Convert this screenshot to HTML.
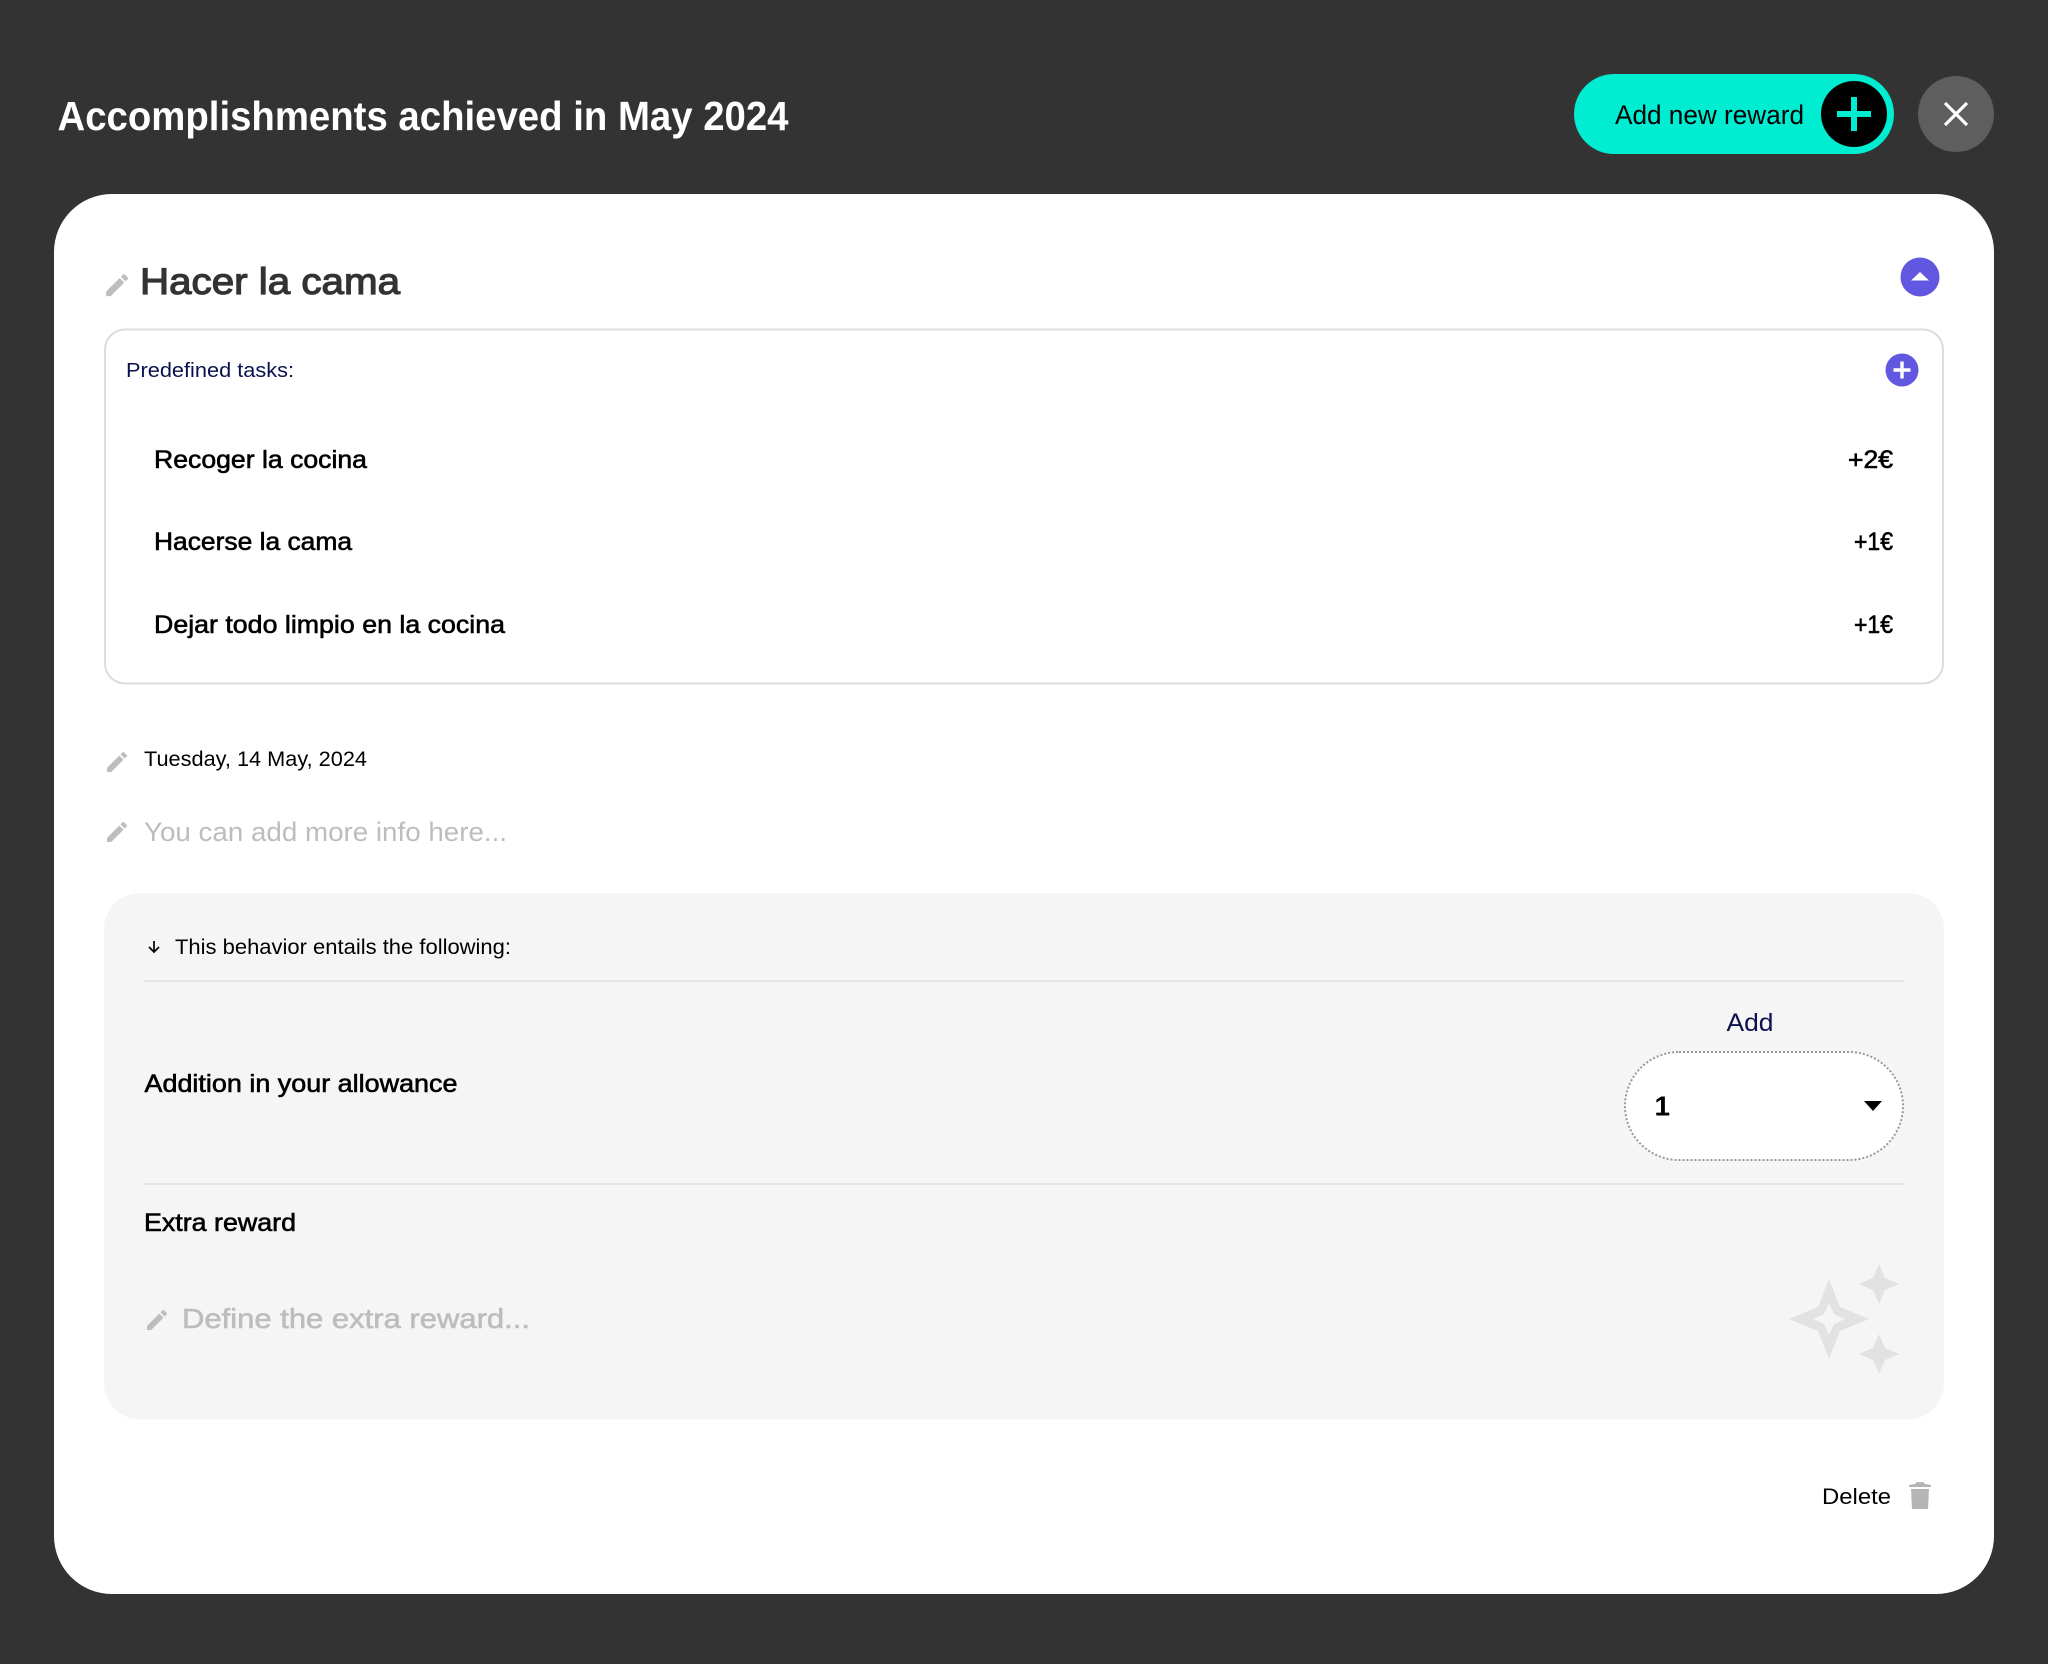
<!DOCTYPE html>
<html lang="en">
<head>
<meta charset="utf-8">
<title>Accomplishments achieved in May 2024</title>
<style>
html,body{margin:0;padding:0;width:2048px;height:1664px;overflow:hidden;background:#333}
svg{display:block;position:absolute;left:0;top:0}
text{font-family:"Liberation Sans",sans-serif;white-space:pre}
.m{stroke-width:.6px;paint-order:stroke}
</style>
</head>
<body>
<svg width="2048" height="1664" viewBox="0 0 2048 1664" xmlns="http://www.w3.org/2000/svg">
<defs>
<path id="pen" fill="#bdbdbd" d="M3 17.25V21h3.75L17.81 9.94l-3.75-3.75L3 17.25zM20.71 7.04c.39-.39.39-1.02 0-1.41l-2.34-2.34c-.39-.39-1.02-.39-1.41 0l-1.83 1.83 3.75 3.75 1.83-1.83z"/>
</defs>
<rect width="2048" height="1664" fill="#333"/>

<!-- header -->
<text x="57.500" y="130" font-size="41" font-weight="700" fill="#fff" textLength="731" lengthAdjust="spacingAndGlyphs">Accomplishments achieved in May 2024</text>
<rect x="1574" y="74" width="320" height="80" rx="40" fill="#00edd1"/>
<text x="1615" y="124" font-size="26.500" fill="#000" textLength="189" lengthAdjust="spacingAndGlyphs">Add new reward</text>
<circle cx="1854" cy="114" r="33" fill="#000"/>
<path d="M1837 114h34M1854 97v34" stroke="#00edd1" stroke-width="6" fill="none"/>
<circle cx="1956" cy="114" r="38" fill="#5e5e5e"/>
<path d="M1945 103l22 22M1967 103l-22 22" stroke="#fff" stroke-width="3.200" fill="none"/>

<!-- card -->
<rect x="54" y="194" width="1940" height="1400" rx="58" fill="#fff"/>

<use href="#pen" transform="translate(102.500 270.500) scale(1.22)"/>
<text x="140" y="294" font-size="37" fill="#333" stroke="#333" stroke-width="1.200" textLength="260" lengthAdjust="spacingAndGlyphs">Hacer la cama</text>
<circle cx="1920" cy="277" r="19.500" fill="#6257e0"/>
<path d="M1911 280.500l9-8.500 9 8.500z" fill="#fff"/>

<!-- predefined box -->
<rect x="105" y="329.500" width="1838" height="354" rx="20" fill="#fff" stroke="#dcdcdc" stroke-width="2"/>
<text x="126" y="377" font-size="20.500" fill="#0b1150" textLength="168" lengthAdjust="spacingAndGlyphs">Predefined tasks:</text>
<circle cx="1902" cy="370" r="16.500" fill="#6257e0"/>
<path d="M1893.500 370h17M1902 361.500v17" stroke="#fff" stroke-width="3.400" fill="none"/>

<text class="m" x="154" y="468" font-size="25" fill="#000" stroke="#000" textLength="213" lengthAdjust="spacingAndGlyphs">Recoger la cocina</text>
<text class="m" x="154" y="550" font-size="25" fill="#000" stroke="#000" textLength="198" lengthAdjust="spacingAndGlyphs">Hacerse la cama</text>
<text class="m" x="154" y="633" font-size="25" fill="#000" stroke="#000" textLength="351" lengthAdjust="spacingAndGlyphs">Dejar todo limpio en la cocina</text>
<text class="m" x="1848" y="468" font-size="25" fill="#000" stroke="#000" textLength="45" lengthAdjust="spacingAndGlyphs">+2€</text>
<text class="m" x="1854" y="550" font-size="25" fill="#000" stroke="#000" textLength="39" lengthAdjust="spacingAndGlyphs">+1€</text>
<text class="m" x="1854" y="633" font-size="25" fill="#000" stroke="#000" textLength="39" lengthAdjust="spacingAndGlyphs">+1€</text>

<!-- date + info -->
<use href="#pen" transform="translate(103.700 748.700) scale(1.11)"/>
<text x="144" y="766" font-size="21" fill="#000" textLength="223" lengthAdjust="spacingAndGlyphs">Tuesday, 14 May, 2024</text>
<use href="#pen" transform="translate(103.700 818.700) scale(1.11)"/>
<text x="144" y="841" font-size="26.500" fill="#bdbdbd" textLength="363" lengthAdjust="spacingAndGlyphs">You can add more info here...</text>

<!-- grey panel -->
<rect x="104" y="893" width="1840" height="526.500" rx="36" fill="#f5f5f5"/>
<path d="M154 941v11M149 947l5 5 5-5" stroke="#000" stroke-width="1.700" fill="none"/>
<text x="175" y="954" font-size="21" fill="#000" textLength="336" lengthAdjust="spacingAndGlyphs">This behavior entails the following:</text>
<rect x="144" y="980" width="1760" height="2" fill="#e5e5e5"/>

<text class="m" x="144.500" y="1092" font-size="25" fill="#000" stroke="#000" textLength="313" lengthAdjust="spacingAndGlyphs">Addition in your allowance</text>
<text x="1726.500" y="1031" font-size="25" fill="#0b1150" textLength="47" lengthAdjust="spacingAndGlyphs">Add</text>
<rect x="1625" y="1052" width="278" height="108" rx="54" fill="#fff" stroke="#999" stroke-width="2" stroke-dasharray="2 2"/>
<text x="1654.500" y="1115.500" font-size="28" font-weight="700" fill="#000">1</text>
<path d="M1864 1101h18l-9 10z" fill="#000"/>
<rect x="144" y="1183" width="1760" height="2" fill="#e5e5e5"/>

<text class="m" x="144" y="1231" font-size="25" fill="#000" stroke="#000" textLength="152" lengthAdjust="spacingAndGlyphs">Extra reward</text>
<use href="#pen" transform="translate(143.700 1306.700) scale(1.11)"/>
<text x="182" y="1328" font-size="28" fill="#bdbdbd" stroke="#bdbdbd" stroke-width=".6" textLength="348" lengthAdjust="spacingAndGlyphs">Define the extra reward...</text>

<!-- sparkles -->
<path fill="#e2e2e2" fill-rule="evenodd" transform="translate(1829 1319)" d="M0-40L11-12 40 0 11 12 0 40-11 12-40 0-11-12ZM0-16L-5-5-16 0-5 5 0 16 5 5 16 0 5-5Z"/>
<path fill="#e2e2e2" transform="translate(1879 1284)" d="M0-20L6-6 20 0 6 6 0 20-6 6-20 0-6-6Z"/>
<path fill="#e2e2e2" transform="translate(1879 1354)" d="M0-20L6-6 20 0 6 6 0 20-6 6-20 0-6-6Z"/>

<!-- delete -->
<text x="1822" y="1504" font-size="22.500" fill="#000" textLength="69" lengthAdjust="spacingAndGlyphs">Delete</text>
<path fill="#b5b5b5" d="M1911 1489h18l-1 20h-16zM1909 1487v-2l6-1 2-2h6l2 2 6 1v2z"/>
</svg>
</body>
</html>
